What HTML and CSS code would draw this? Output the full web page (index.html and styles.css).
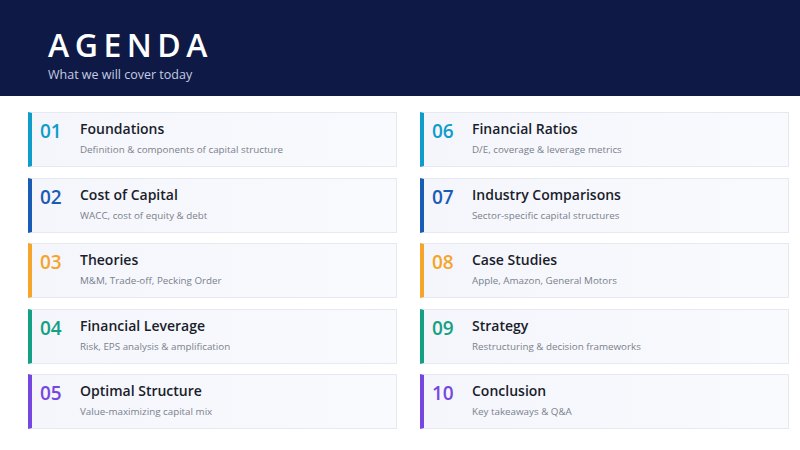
FILE: index.html
```html
<!DOCTYPE html>
<html lang="en">
<head>
<meta charset="utf-8">
<title>Agenda</title>
<link rel="stylesheet" href="styles.css">
</head>
<body>
<header class="hero">
  <h1 class="title">AGENDA</h1>
  <p class="subtitle">What we will cover today</p>
</header>
<main class="grid">
  <div class="card c1"><span class="num">01</span><div class="txt"><div class="name">Foundations</div><div class="desc">Definition &amp; components of capital structure</div></div></div>
  <div class="card c1"><span class="num">06</span><div class="txt"><div class="name">Financial Ratios</div><div class="desc">D/E, coverage &amp; leverage metrics</div></div></div>
  <div class="card c2"><span class="num">02</span><div class="txt"><div class="name">Cost of Capital</div><div class="desc">WACC, cost of equity &amp; debt</div></div></div>
  <div class="card c2"><span class="num">07</span><div class="txt"><div class="name">Industry Comparisons</div><div class="desc">Sector-specific capital structures</div></div></div>
  <div class="card c3"><span class="num">03</span><div class="txt"><div class="name">Theories</div><div class="desc">M&amp;M, Trade-off, Pecking Order</div></div></div>
  <div class="card c3"><span class="num">08</span><div class="txt"><div class="name">Case Studies</div><div class="desc">Apple, Amazon, General Motors</div></div></div>
  <div class="card c4"><span class="num">04</span><div class="txt"><div class="name">Financial Leverage</div><div class="desc">Risk, EPS analysis &amp; amplification</div></div></div>
  <div class="card c4"><span class="num">09</span><div class="txt"><div class="name">Strategy</div><div class="desc">Restructuring &amp; decision frameworks</div></div></div>
  <div class="card c5"><span class="num">05</span><div class="txt"><div class="name">Optimal Structure</div><div class="desc">Value-maximizing capital mix</div></div></div>
  <div class="card c5"><span class="num">10</span><div class="txt"><div class="name">Conclusion</div><div class="desc">Key takeaways &amp; Q&amp;A</div></div></div>
</main>
</body>
</html>
```
FILE: styles.css
```css
* { box-sizing: border-box; }
html, body { margin: 0; padding: 0; }
body {
  width: 800px;
  height: 450px;
  overflow: hidden;
  background: #ffffff;
  font-family: "Open Sans", "Noto Sans", sans-serif;
}
.hero {
  height: 96px;
  background: #0e1a45;
  padding: 23px 0 0 48px;
}
.title {
  margin: 0;
  color: #ffffff;
  font-size: 32px;
  font-weight: 600;
  letter-spacing: 5.5px;
  line-height: 44px;
}
.subtitle {
  margin: 0;
  color: #c5cbe0;
  font-size: 12.5px;
  line-height: 16px;
}
.grid {
  display: grid;
  grid-template-columns: 369px 369px;
  grid-auto-rows: 55px;
  column-gap: 23px;
  row-gap: 10.5px;
  padding: 16px 0 0 28px;
}
.card {
  display: flex;
  align-items: flex-start;
  background: linear-gradient(90deg, #f4f6fc 0%, #f9fafd 100%);
  border: 1px solid #e6e9f1;
  border-left: 4px solid #0ea0c8;
  padding: 4px 0 0 8px;
}
.num {
  width: 40px;
  font-size: 19px;
  font-weight: 600;
  line-height: 28px;
}
.name {
  font-size: 14px;
  font-weight: 600;
  color: #1a1d2b;
  line-height: 24px;
}
.desc {
  margin-top: 2px;
  font-size: 9.8px;
  color: #7a7f8c;
  line-height: 14px;
}
.c1 { border-left-color: #0f9ccb; }
.c1 .num { color: #0f9ccb; }
.c2 { border-left-color: #1a5bb5; }
.c2 .num { color: #1a5bb5; }
.c3 { border-left-color: #f5a52a; }
.c3 .num { color: #f5a52a; }
.c4 { border-left-color: #14a084; }
.c4 .num { color: #14a084; }
.c5 { border-left-color: #7647e0; }
.c5 .num { color: #7647e0; }
```
